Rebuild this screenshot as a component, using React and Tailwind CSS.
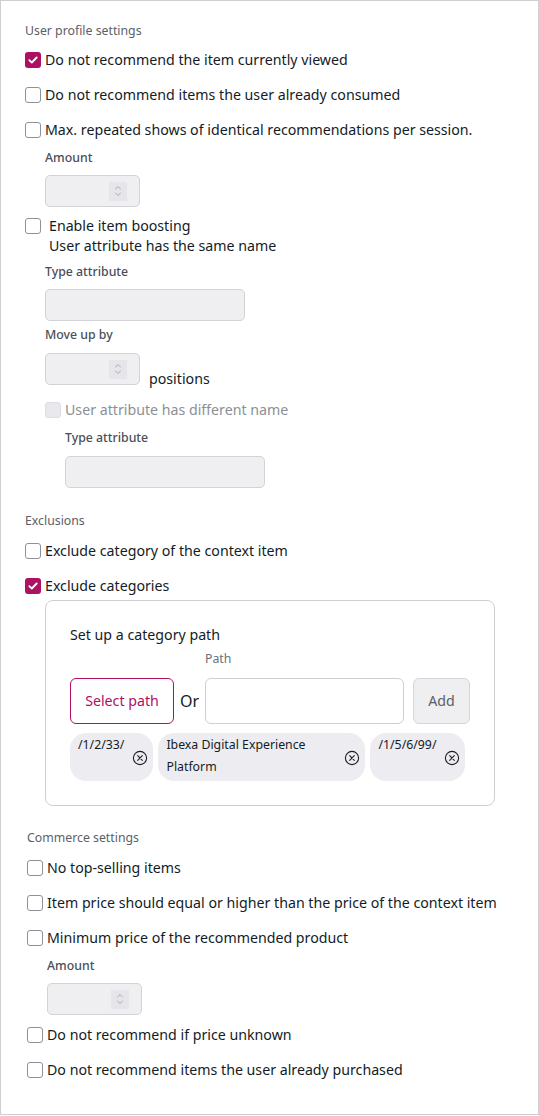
import React from "react";

function Checkbox({ checked, disabled }) {
  if (checked) {
    return (
      <span className="w-4 h-4 shrink-0 rounded-[3px] bg-[#ae1164] flex items-center justify-center">
        <svg width="10" height="8" viewBox="0 0 10 8" fill="none">
          <path d="M1.3 4.2 L3.8 6.5 L8.7 1.5" stroke="white" strokeWidth="1.8" strokeLinecap="round" strokeLinejoin="round" />
        </svg>
      </span>
    );
  }
  if (disabled) {
    return <span className="block w-4 h-4 shrink-0 rounded-[3px] bg-[#e9e9ed] border border-[#dedee2]" />;
  }
  return <span className="block w-4 h-4 shrink-0 rounded-[3px] bg-white border border-[#8e9197]" />;
}

function Row({ checked, disabled, children, className = "" }) {
  return (
    <div className={`flex items-center h-5 gap-1 text-[14.2px] leading-5 ${disabled ? "text-[#8b8f96]" : "text-[#131c26]"} ${className}`}>
      <Checkbox checked={checked} disabled={disabled} />
      <span>{children}</span>
    </div>
  );
}

function Heading({ children, className = "" }) {
  return <div className={`text-[12.3px] leading-4 text-[#5b6068] ${className}`}>{children}</div>;
}

function FieldLabel({ children, className = "" }) {
  return <div className={`text-[12.3px] leading-4 font-medium text-[#4a4f57] ${className}`}>{children}</div>;
}

function Spinner() {
  return (
    <span className="w-[18px] h-[19px] bg-[#e6e6ea] flex items-center justify-center">
      <svg width="10" height="14" viewBox="0 0 10 14" fill="none">
        <path d="M2.5 5 L5 2.5 L7.5 5" stroke="#9da1a7" strokeWidth="0.9" strokeLinecap="round" strokeLinejoin="round" />
        <path d="M2.5 9 L5 11.5 L7.5 9" stroke="#9da1a7" strokeWidth="0.9" strokeLinecap="round" strokeLinejoin="round" />
      </svg>
    </span>
  );
}

function NumberInput({ className = "" }) {
  return (
    <div className={`w-[95px] h-[32px] rounded-[5px] border border-[#d3d3d7] bg-[#efeff2] flex items-center justify-end pr-[12px] ${className}`}>
      <Spinner />
    </div>
  );
}

function TextInput({ className = "" }) {
  return <div className={`w-[200px] h-[32px] rounded-[5px] border border-[#d3d3d7] bg-[#efeff2] ${className}`} />;
}

function CloseIcon() {
  return (
    <svg width="16" height="16" viewBox="0 0 16 16" fill="none" className="shrink-0 self-center ml-[8px]">
      <circle cx="8" cy="8" r="6.6" stroke="#1b1f25" strokeWidth="1.1" />
      <path d="M5.7 5.7 L10.3 10.3 M10.3 5.7 L5.7 10.3" stroke="#1b1f25" strokeWidth="1.1" strokeLinecap="round" />
    </svg>
  );
}

function Chip({ children, textClass = "" }) {
  return (
    <div className="flex h-[48px] rounded-[16px] bg-[#ededf1] pl-[8px] pr-[5px] pt-[1px]">
      <span className={`text-[12.3px] leading-[22px] text-[#131c26] ${textClass}`}>{children}</span>
      <CloseIcon />
    </div>
  );
}

export default function App() {
  return (
    <div className="w-[539px] h-[1115px] border border-[#cfcfcf] bg-white pl-[24px] pt-[22px] font-['Noto_Sans',sans-serif]">
      <Heading>User profile settings</Heading>
      <Row checked className="mt-[11px]">Do not recommend the item currently viewed</Row>
      <Row className="mt-[15px]">Do not recommend items the user already consumed</Row>
      <Row className="mt-[15px]">Max. repeated shows of identical recommendations per session.</Row>

      <div className="ml-[20px]">
        <FieldLabel className="mt-[10px]">Amount</FieldLabel>
        <NumberInput className="mt-[9px]" />
      </div>

      <div className="flex items-start mt-[9px] text-[14.2px] leading-5 text-[#131c26]">
        <span className="flex mt-[2px]"><Checkbox /></span>
        <div className="pl-[8px]">
          <div>Enable item boosting</div>
          <div>User attribute has the same name</div>
        </div>
      </div>

      <div className="ml-[20px]">
        <FieldLabel className="mt-[8px]">Type attribute</FieldLabel>
        <TextInput className="mt-[9px]" />
        <FieldLabel className="mt-[6px]">Move up by</FieldLabel>
        <div className="flex items-end mt-[10px]">
          <NumberInput />
          <span className="ml-[9px] mb-[-4px] text-[14.2px] leading-5 text-[#131c26]">positions</span>
        </div>
        <Row disabled className="mt-[15px]">User attribute has different name</Row>
        <div className="ml-[20px]">
          <FieldLabel className="mt-[10px]">Type attribute</FieldLabel>
          <TextInput className="mt-[10px]" />
        </div>
      </div>

      <Heading className="mt-[25px]">Exclusions</Heading>
      <Row className="mt-[12px]">Exclude category of the context item</Row>
      <Row checked className="mt-[15px]">Exclude categories</Row>

      <div className="ml-[20px] mt-[4px] w-[450px] rounded-[8px] border border-[#cfcfd3] px-[24px] pt-[24px] pb-[24px]">
        <div className="text-[14.2px] leading-5 text-[#131c26]">Set up a category path</div>
        <div className="flex items-end mt-[6px]">
          <button className="w-[104px] h-[46px] rounded-[6px] border border-[#ae1164] bg-white text-[14.2px] text-[#ae1164]">
            Select path
          </button>
          <span className="ml-[6px] mr-[6px] h-[46px] flex items-center text-[16px] text-[#131c26]">Or</span>
          <div className="flex flex-col">
            <span className="text-[12.3px] leading-4 text-[#6b7078]">Path</span>
            <div className="mt-[11px] w-[199px] h-[46px] rounded-[6px] border border-[#cfcfd3] bg-white" />
          </div>
          <button className="ml-[9px] w-[57px] h-[46px] rounded-[6px] border border-[#d6d6da] bg-[#efeff2] text-[14.2px] text-[#5b6068]">
            Add
          </button>
        </div>
        <div className="flex gap-[5px] mt-[9px]">
          <Chip>/1/2/33/</Chip>
          <Chip textClass="max-w-[170px]">Ibexa Digital Experience Platform</Chip>
          <Chip>/1/5/6/99/</Chip>
        </div>
      </div>

      <div className="ml-[2px]">
        <Heading className="mt-[24px]">Commerce settings</Heading>
        <Row className="mt-[12px]">No top-selling items</Row>
        <Row className="mt-[15px]">Item price should equal or higher than the price of the context item</Row>
        <Row className="mt-[15px]">Minimum price of the recommended product</Row>
        <div className="ml-[20px]">
          <FieldLabel className="mt-[10px]">Amount</FieldLabel>
          <NumberInput className="mt-[9px]" />
        </div>
        <Row className="mt-[10px]">Do not recommend if price unknown</Row>
        <Row className="mt-[15px]">Do not recommend items the user already purchased</Row>
      </div>
    </div>
  );
}
